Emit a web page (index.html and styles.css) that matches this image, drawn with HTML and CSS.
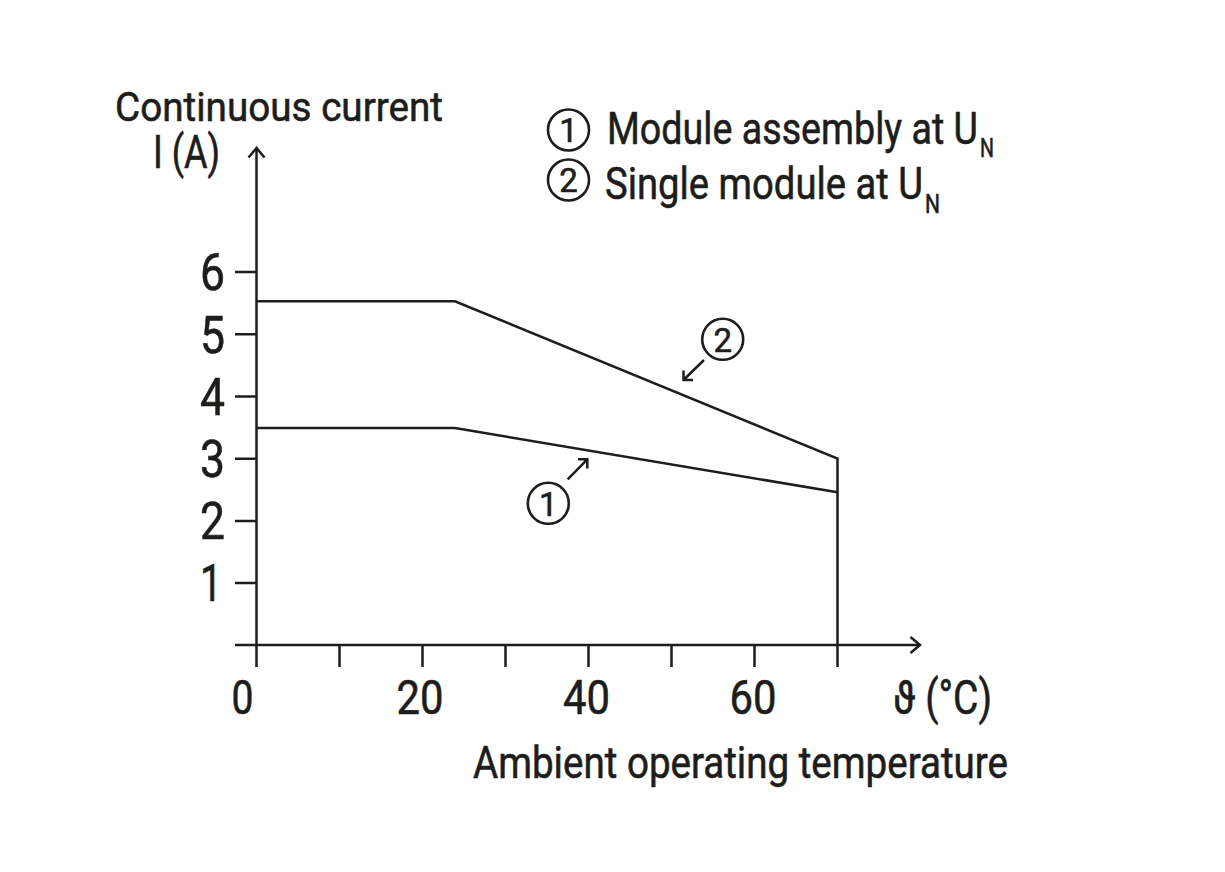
FILE: index.html
```html
<!DOCTYPE html>
<html lang="en">
<head>
<meta charset="utf-8">
<title>Continuous current derating</title>
<link rel="stylesheet" href="styles.css">
</head>
<body>
<div class="page">
<svg class="chart" width="1225" height="872" viewBox="0 0 1225 872" xmlns="http://www.w3.org/2000/svg">
  <!-- axis titles -->
  <text class="t t-title" x="115" y="121" textLength="328" lengthAdjust="spacingAndGlyphs">Continuous current</text>
  <text class="t t-unit" x="153" y="168" textLength="67" lengthAdjust="spacingAndGlyphs">I (A)</text>

  <!-- legend -->
  <g class="legend">
    <circle class="ring" cx="568.5" cy="130" r="20.5"/>
    <text class="t t-ringnum" x="568.5" y="142" text-anchor="middle">1</text>
    <text class="t t-legend" x="607" y="144" textLength="371" lengthAdjust="spacingAndGlyphs">Module assembly at U</text>
    <text class="t t-sub" x="980" y="157" textLength="14" lengthAdjust="spacingAndGlyphs">N</text>

    <circle class="ring" cx="568.5" cy="180" r="20.5"/>
    <text class="t t-ringnum" x="568.5" y="192" text-anchor="middle">2</text>
    <text class="t t-legend" x="605" y="199" textLength="318" lengthAdjust="spacingAndGlyphs">Single module at U</text>
    <text class="t t-sub" x="925" y="213" textLength="15" lengthAdjust="spacingAndGlyphs">N</text>
  </g>

  <!-- axes -->
  <path class="ln" d="M256.5 148 V667"/>
  <path class="ln" d="M248.5 157.5 L256.5 148 L264.5 157.5"/>
  <path class="ln" d="M235 645 H920"/>
  <path class="ln" d="M910.5 637 L920 645 L910.5 653"/>

  <!-- y ticks -->
  <path class="ln" d="M235 272 H256 M235 334.3 H256 M235 396.5 H256 M235 458.7 H256 M235 520.9 H256 M235 583.1 H256"/>
  <!-- x ticks -->
  <path class="ln" d="M339.5 645 V667 M422.5 645 V667 M505.5 645 V667 M588.5 645 V667 M671.5 645 V667 M754.5 645 V667 M837.5 645 V667"/>

  <!-- y labels -->
  <text class="t t-tick" x="225" y="290" text-anchor="end" textLength="25" lengthAdjust="spacingAndGlyphs">6</text>
  <text class="t t-tick" x="225" y="352.5" text-anchor="end" textLength="25" lengthAdjust="spacingAndGlyphs">5</text>
  <text class="t t-tick" x="225" y="414.5" text-anchor="end" textLength="25" lengthAdjust="spacingAndGlyphs">4</text>
  <text class="t t-tick" x="225" y="477" text-anchor="end" textLength="25" lengthAdjust="spacingAndGlyphs">3</text>
  <text class="t t-tick" x="225" y="539" text-anchor="end" textLength="25" lengthAdjust="spacingAndGlyphs">2</text>
  <text class="t t-tick" x="222" y="601" text-anchor="end" textLength="22" lengthAdjust="spacingAndGlyphs">1</text>

  <!-- x labels -->
  <text class="t t-xtick" x="242.5" y="714" text-anchor="middle" textLength="22" lengthAdjust="spacingAndGlyphs">0</text>
  <text class="t t-xtick" x="420" y="714" text-anchor="middle" textLength="47" lengthAdjust="spacingAndGlyphs">20</text>
  <text class="t t-xtick" x="586.5" y="714" text-anchor="middle" textLength="47" lengthAdjust="spacingAndGlyphs">40</text>
  <text class="t t-xtick" x="753" y="714" text-anchor="middle" textLength="47" lengthAdjust="spacingAndGlyphs">60</text>
  <text class="t t-xtick" x="893" y="714" textLength="99" lengthAdjust="spacingAndGlyphs">ϑ (°C)</text>
  <text class="t t-xtitle" x="473" y="778" textLength="535" lengthAdjust="spacingAndGlyphs">Ambient operating temperature</text>

  <!-- curves -->
  <path class="ln" d="M256.5 301.3 H455 L837.5 458.7 V645"/>
  <path class="ln" d="M256.5 428 H455 L837.5 492.3"/>

  <!-- annotation 2 -->
  <circle class="ring" cx="722.7" cy="339.3" r="20.5"/>
  <text class="t t-ringnum" x="722.7" y="351.5" text-anchor="middle">2</text>
  <path class="ln" d="M704 360 L683.5 380 M683.5 370.5 L683.5 380 L693 380"/>

  <!-- annotation 1 -->
  <circle class="ring" cx="548.3" cy="503.3" r="20.5"/>
  <text class="t t-ringnum" x="548.3" y="515.5" text-anchor="middle">1</text>
  <path class="ln" d="M567.7 479.3 L587.3 459.3 M578 459.3 L587.3 459.3 L587.3 468.6"/>
</svg>
</div>
</body>
</html>
```

FILE: styles.css
```css
html, body {
  margin: 0;
  padding: 0;
  background: #ffffff;
}

.page {
  width: 1225px;
  height: 872px;
  overflow: hidden;
  background: #ffffff;
}

.chart {
  display: block;
}

.ln {
  fill: none;
  stroke: #1d1d1b;
  stroke-width: 2.5;
  stroke-linecap: butt;
  stroke-linejoin: miter;
}

.ring {
  fill: none;
  stroke: #1d1d1b;
  stroke-width: 2.6;
}

.t {
  font-family: Roboto, "Liberation Sans", sans-serif;
  fill: #1d1d1b;
  stroke: #1d1d1b;
  stroke-width: 0.6;
  font-weight: 400;
}

.t-title {
  font-size: 41px;
}

.t-unit {
  font-size: 46px;
}

.t-legend {
  font-size: 45px;
}

.t-sub {
  font-size: 25px;
}

.t-ringnum {
  font-size: 33px;
}

.t-tick {
  font-size: 52px;
}

.t-xtick {
  font-size: 48px;
}

.t-xtitle {
  font-size: 44px;
}
```
